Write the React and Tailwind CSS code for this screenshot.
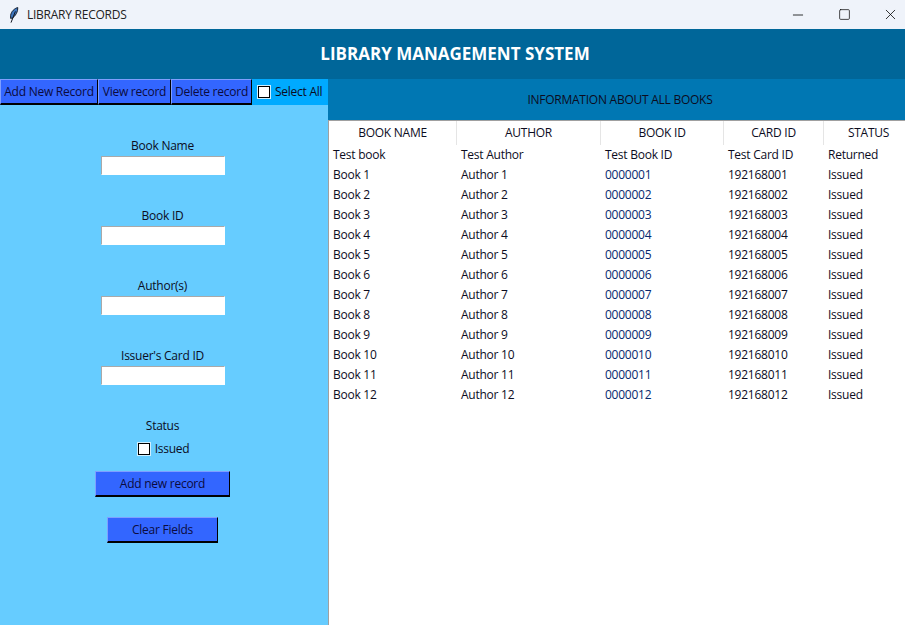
import React from 'react';
import { Minus, Square, X } from 'lucide-react';

const FONT = "font-['Open_Sans','Noto_Sans',sans-serif]";

const COLUMNS = [
  { label: 'BOOK NAME', width: 'w-[128px]' },
  { label: 'AUTHOR', width: 'w-[144px]' },
  { label: 'BOOK ID', width: 'w-[123px]' },
  { label: 'CARD ID', width: 'w-[100px]' },
  { label: 'STATUS', width: 'w-[81px]' },
];

const ROWS = [
  ['Test book', 'Test Author', 'Test Book ID', 'Test Card ID', 'Returned'],
  ...Array.from({ length: 12 }, (_, i) => {
    const n = i + 1;
    const pad = String(n).padStart(2, '0');
    return [`Book ${n}`, `Author ${n}`, `00000${pad}`, `1921680${pad}`, 'Issued'];
  }),
];

const FIELDS = ['Book Name', 'Book ID', 'Author(s)', "Issuer's Card ID"];

function Feather() {
  return (
    <svg width="10" height="16" viewBox="0 0 10 16" fill="none">
      <path d="M8.8 0.6 C5.5 1.2 2.2 4.6 1.6 8.4 L1.6 11.4 L3.6 11 C6.8 8.6 9 4.6 8.8 0.6 Z" fill="#3f78c0" stroke="#10151f" strokeWidth="0.9" />
      <path d="M6.4 4.4 L2 15.6" stroke="#10151f" strokeWidth="1" />
    </svg>
  );
}

function TkButton({ children, className }) {
  return (
    <button className={`bg-[#3366ff] text-[#0b0b40] border border-t-[#7f9fff] border-l-[#7f9fff] border-r-black border-b-black border-b-2 ${className}`}>
      {children}
    </button>
  );
}

function TkCheck() {
  return <span className="block w-[12px] h-[12px] bg-white border border-black outline outline-1 outline-[#cfefff]" />;
}

export default function App() {
  return (
    <div className={`w-[905px] h-[625px] flex flex-col overflow-hidden bg-white text-[12px] tracking-[-0.25px] text-[#0c0c1e] ${FONT}`}>
      <div className="h-[29px] bg-[#eff3fa] flex items-center">
        <div className="ml-[9px] mr-[8px] flex items-center"><Feather /></div>
        <span className="text-[#222]">LIBRARY RECORDS</span>
        <div className="ml-auto mr-[-8px] flex items-center text-black">
          <div className="w-[46px] flex justify-center"><Minus size={16} strokeWidth={1.2} /></div>
          <div className="w-[46px] flex justify-center"><Square size={13} strokeWidth={1.3} /></div>
          <div className="w-[46px] flex justify-center"><X size={17} strokeWidth={1.1} /></div>
        </div>
      </div>

      <div className="h-[50px] bg-[#006699] flex items-center justify-center pl-[5px] text-white font-bold text-[17px] tracking-normal">
        LIBRARY MANAGEMENT SYSTEM
      </div>

      <div className="flex flex-1 min-h-0">
        <div className="w-[328px] bg-[#66ccff] flex flex-col">
          <div className="h-[26px] bg-[#00aaff] flex">
            <TkButton className="w-[98px]">Add New Record</TkButton>
            <TkButton className="w-[73px]">View record</TkButton>
            <TkButton className="w-[81px]">Delete record</TkButton>
            <div className="flex items-center ml-[6px] gap-[5px]">
              <TkCheck />
              <span>Select All</span>
            </div>
          </div>

          <div className="flex flex-col items-center pt-[32px] pr-[3px]">
            {FIELDS.map((field) => (
              <div key={field} className="h-[70px] flex flex-col items-center">
                <span className="h-[19px] leading-[18px]">{field}</span>
                <input className="w-[124px] h-[19px] bg-white border border-[#a9a9a9] border-b-white border-r-white" />
              </div>
            ))}
            <span className="h-[18px] leading-[18px]">Status</span>
            <div className="flex items-center gap-[5px] mt-[5px] ml-[2px]">
              <TkCheck />
              <span>Issued</span>
            </div>
            <TkButton className="w-[135px] h-[26px] mt-[13px]">Add new record</TkButton>
            <TkButton className="w-[111px] h-[26px] mt-[20px]">Clear Fields</TkButton>
          </div>
        </div>

        <div className="flex-1 flex flex-col">
          <div className="h-[41px] bg-[#0077b3] flex items-center justify-center pl-[7px]">INFORMATION ABOUT ALL BOOKS</div>
          <div className="flex-1 border-t border-t-[#a0a0a0] border-l border-l-[#a0a0a0]">
            <div className="flex h-[24px]">
              {COLUMNS.map((col, i) => (
                <div key={col.label} className={`${col.width} flex items-center justify-center ${i < 4 ? 'border-r border-[#e5e5e5]' : 'pl-[8px]'}`}>
                  {col.label}
                </div>
              ))}
            </div>
            {ROWS.map((row, r) => (
              <div key={row[0]} className="flex h-[20px] items-center">
                {row.map((cell, i) => (
                  <div key={i} className={`${COLUMNS[i].width} pl-[4px] ${i === 2 && r > 0 ? 'text-[#06286e]' : ''}`}>{cell}</div>
                ))}
              </div>
            ))}
          </div>
        </div>
      </div>
    </div>
  );
}
